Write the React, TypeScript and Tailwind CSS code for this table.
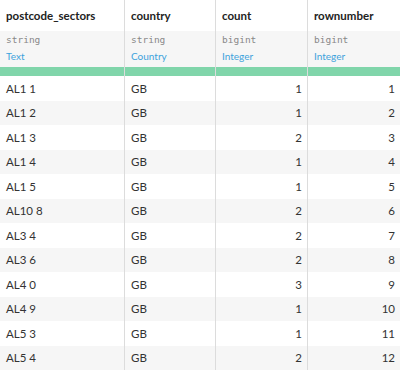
const columns = [
  { name: 'postcode_sectors', type: 'string', meaning: 'Text', width: 'w-[125px]', align: 'left' },
  { name: 'country', type: 'string', meaning: 'Country', width: 'w-[91px]', align: 'left' },
  { name: 'count', type: 'bigint', meaning: 'Integer', width: 'w-[92px]', align: 'right' },
  { name: 'rownumber', type: 'bigint', meaning: 'Integer', width: 'flex-1', align: 'right' },
];

const rows: [string, string, number, number][] = [
  ['AL1 1', 'GB', 1, 1],
  ['AL1 2', 'GB', 1, 2],
  ['AL1 3', 'GB', 2, 3],
  ['AL1 4', 'GB', 1, 4],
  ['AL1 5', 'GB', 1, 5],
  ['AL10 8', 'GB', 2, 6],
  ['AL3 4', 'GB', 2, 7],
  ['AL3 6', 'GB', 2, 8],
  ['AL4 0', 'GB', 3, 9],
  ['AL4 9', 'GB', 1, 10],
  ['AL5 3', 'GB', 1, 11],
  ['AL5 4', 'GB', 2, 12],
];

export default function App() {
  return (
    <div className="h-[372px] w-[400px] overflow-hidden bg-white font-['Lato',sans-serif] text-[#333]">
      <div className="flex">
        {columns.map((col, i) => (
          <div
            key={col.name}
            className={`${col.width} ${i < columns.length - 1 ? 'border-r border-[#dcdcdc]' : ''}`}
          >
            <div className="flex h-[31px] items-center px-[6px] pt-[1px] text-[11.5px] font-bold text-[#222]">
              {col.name}
            </div>
            <div className="flex h-[36px] flex-col bg-[#f6f6f6] px-[6px] pt-[1px]">
              <div className="font-['DejaVu_Sans_Mono',monospace] text-[9.5px] leading-[16px] text-[#888]">
                {col.type}
              </div>
              <div className="text-[10px] leading-[17px] text-[#3ea3dc]">{col.meaning}</div>
            </div>
            <div className="h-[9px] bg-[#80d5aa]" />
            {rows.map((r, j) => (
              <div
                key={j}
                className={`flex h-[24.5px] items-center px-[6px] text-[11.5px] ${
                  col.align === 'right' ? 'justify-end pr-[5px]' : ''
                } ${j % 2 === 1 ? 'bg-[#f6f6f6]' : 'bg-white'}`}
              >
                {r[i]}
              </div>
            ))}
          </div>
        ))}
      </div>
    </div>
  );
}
